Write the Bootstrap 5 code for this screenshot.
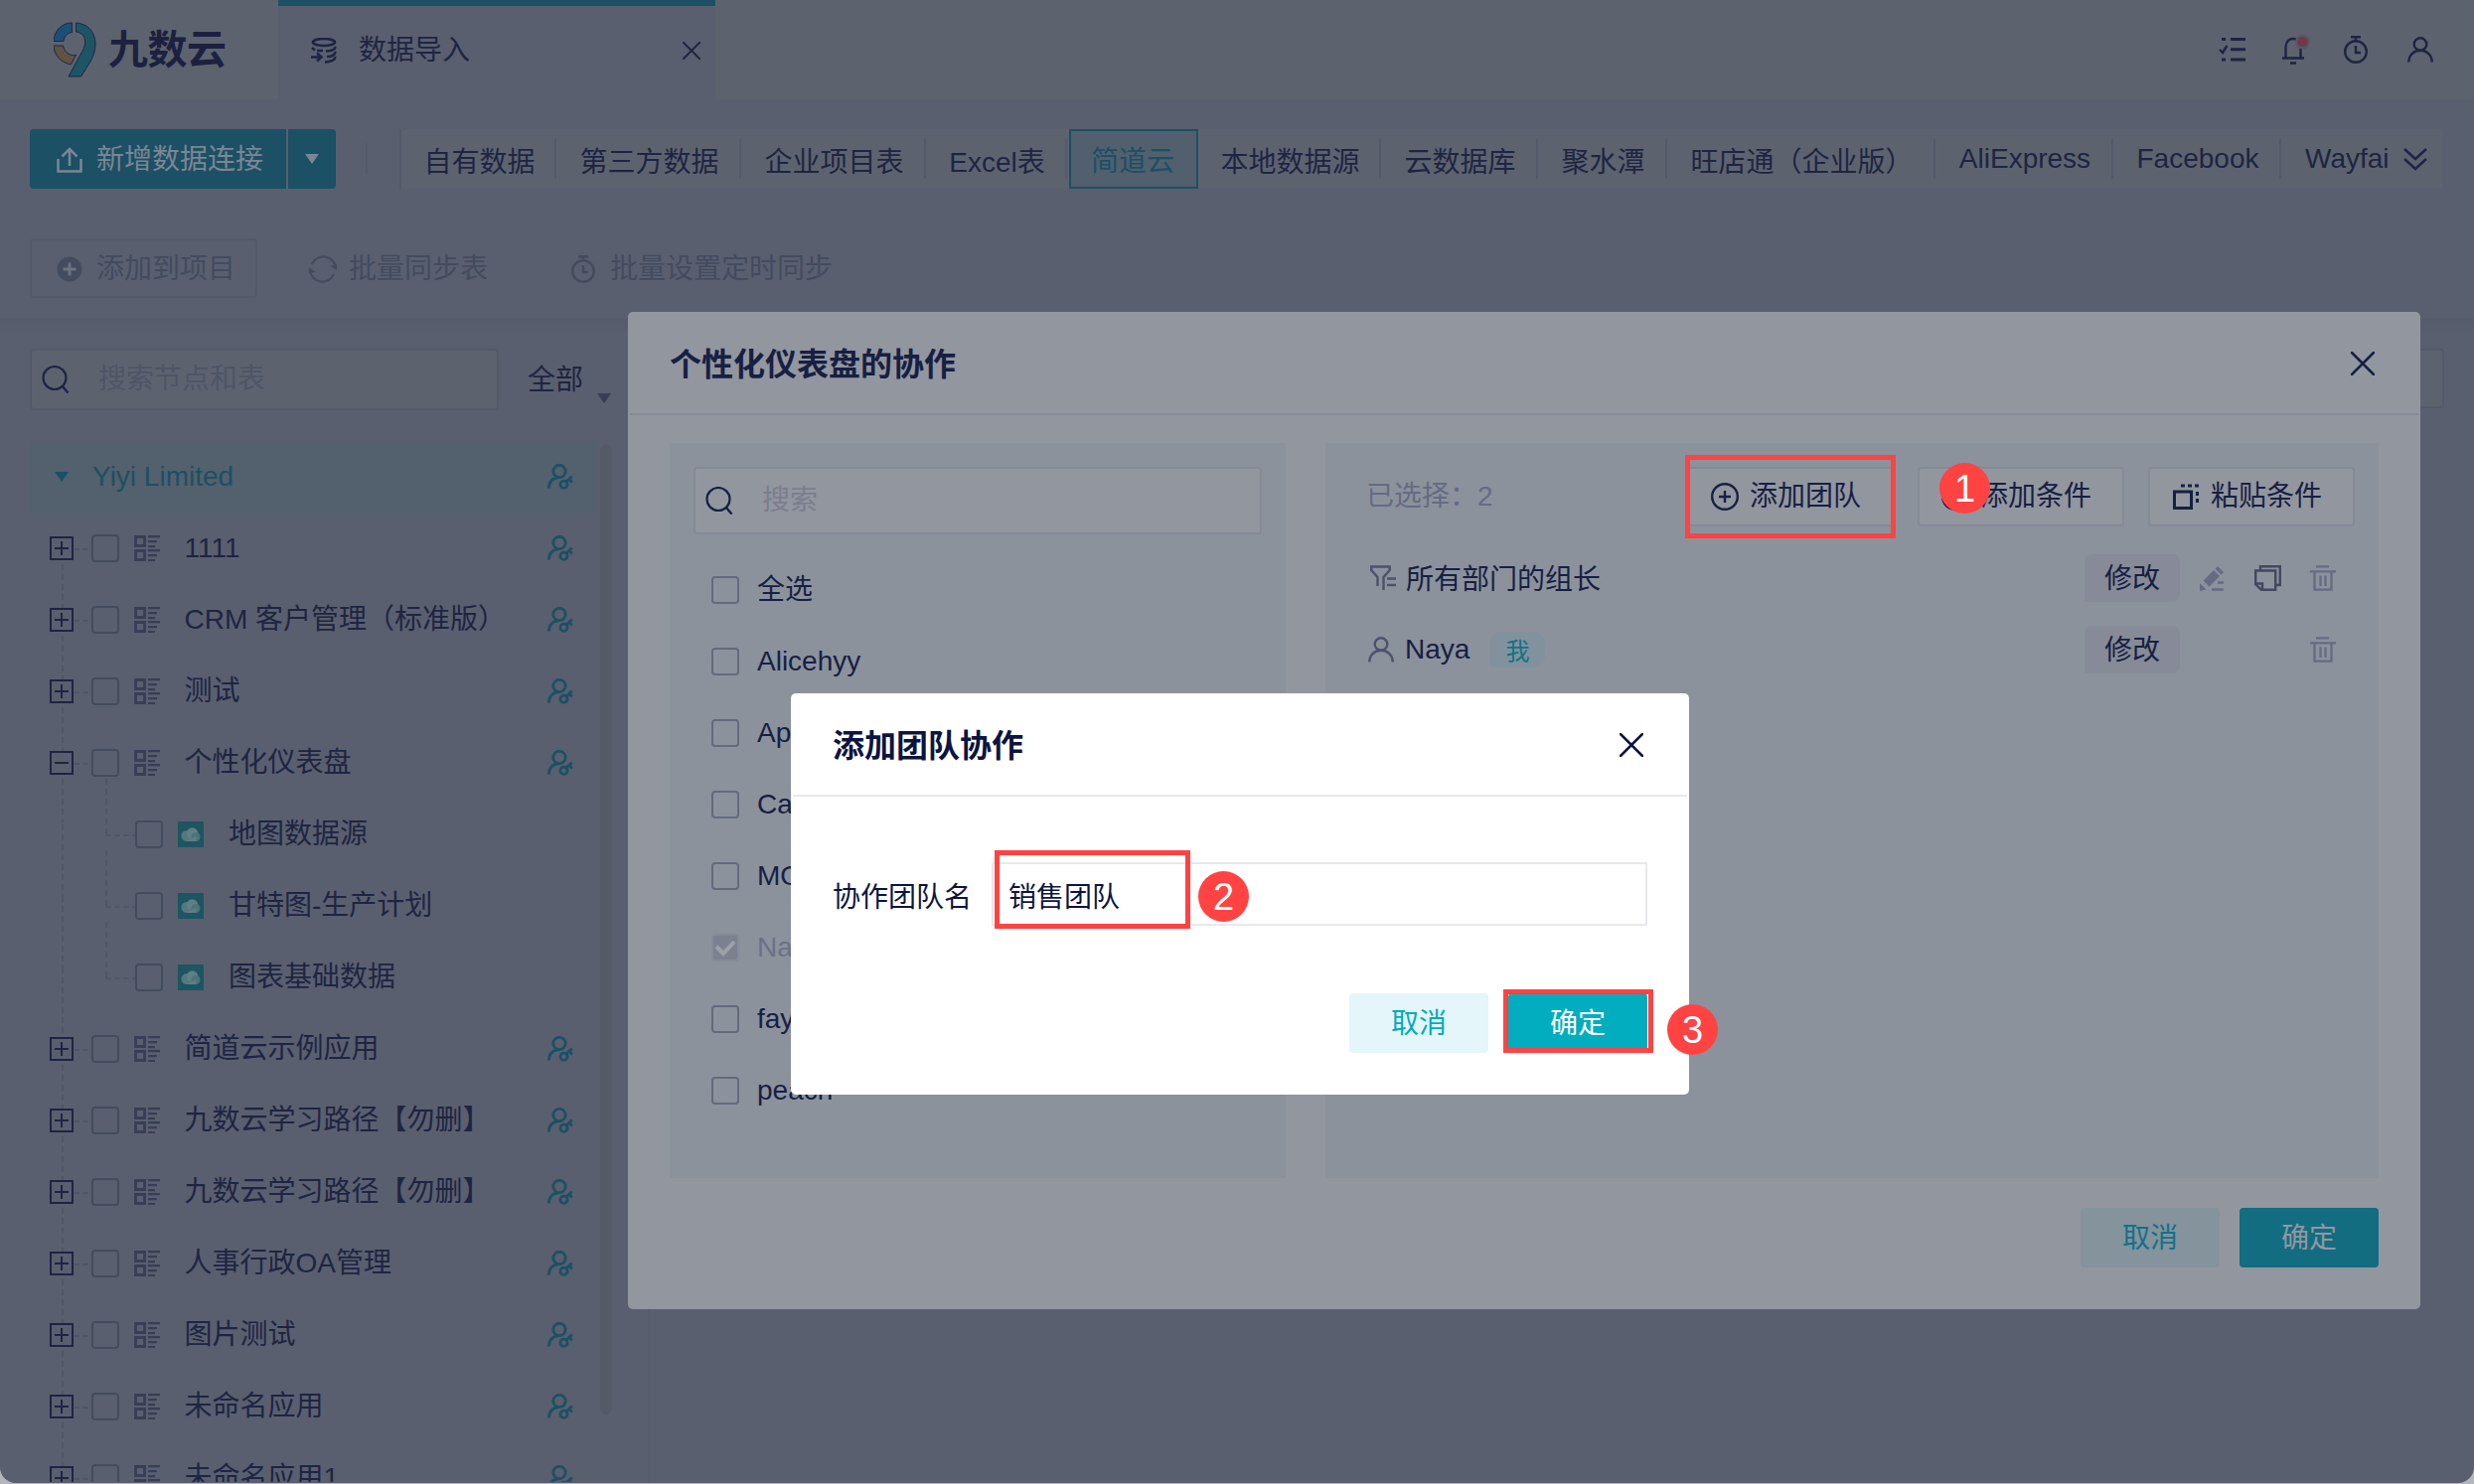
<!DOCTYPE html>
<html lang="zh-CN">
<head>
    <meta charset="UTF-8">
    <meta name="viewport" content="width=device-width, initial-scale=1.0">
    <title>九数云 - 数据导入</title>
    <link href="https://cdn.jsdelivr.net/npm/bootstrap@5.3.0/dist/css/bootstrap.min.css" rel="stylesheet">
    <style>
        :root {
            --ink: #1e2542;
            --ink-modal: #172042;
            --teal: #1c5064;
            --page: #595f6e;
            --bar: #5c636f;
            --line: #545a69;
            --alert: #ff4343;
        }
        body {
            width: 2490px;
            height: 1494px;
            overflow: hidden;
            background: #b5b6b8;
            color: var(--ink);
            font-family: "Liberation Sans", "Noto Sans CJK SC", sans-serif;
            font-size: 28px;
            line-height: 40px;
        }
        svg { display: block; flex: none; fill: none; stroke: currentColor; }
        .app-window {
            height: 1493px;
            background: var(--page);
            border-radius: 0 0 16px 16px;
        }

        /* top bar */
        .topbar { height: 100px; background: var(--bar); }
        .brand { width: 280px; padding-left: 54px; gap: 12px; }
        .brand-name { font-size: 40px; font-weight: 700; letter-spacing: -.5px; color: #1c2140; }
        .page-tab {
            width: 440px;
            background: var(--page);
            border-top: 6px solid var(--teal);
            padding: 0 15px 5px 33px;
        }
        .top-icons { padding-right: 41px; }

        /* source toolbar */
        .source-bar { padding: 30px 32px 0 30px; }
        .btn-new, .btn-new-more {
            height: 60px;
            border: 0;
            border-radius: 4px 0 0 4px;
            background: var(--teal);
            color: #7b8694;
            font-size: 28px;
        }
        .btn-new { width: 258px; padding: 1px 0 0 27px; gap: 14px; margin-right: 2px; }
        .btn-new-more { width: 48px; border-radius: 0 4px 4px 0; padding: 0; }
        .bar-split { width: 2px; height: 32px; margin: 0 32px 0 30px; background: var(--line); }
        .source-tabs { height: 60px; background: var(--bar); border-left: 2px solid var(--line); }
        .source-tab {
            height: 60px;
            flex: none;
            display: flex;
            align-items: center;
            justify-content: center;
            padding-left: 1px;
            white-space: nowrap;
            background: linear-gradient(var(--line), var(--line)) right center / 2px 40px no-repeat;
        }
        .source-tab.cjk { padding-top: 7px; }
        .source-tab.picked {
            border: 2px solid var(--teal);
            background: #525f6e;
            color: var(--teal);
            padding-left: 0;
            padding-right: 2px;
            margin-left: 2px;
            padding-top: 6px;
        }
        .source-tab.plain { background: none; padding-left: 0; }

        .action-bar { padding: 50px 0 0 30px; height: 130px; color: #434b5f; }
        .btn-add {
            width: 229px; height: 60px;
            border: 2px solid var(--line);
            border-radius: 4px;
            color: inherit;
            font-size: 28px;
            padding: 1px 0 0 25px;
            gap: 14px;
        }
        .action-links { height: 60px; padding-top: 2px; }
        .timer-icon { margin: 0 14px 0 83px; }

        /* tree column */
        .workspace { height: 1173px; box-shadow: inset 0 14px 14px -12px rgba(30, 36, 60, .08); border-top: 1px solid #565c6b; }
        .tree-col { width: 654px; border-right: 2px solid #565c6b; padding-left: 30px; }
        .search-box {
            height: 62px;
            border: 2px solid var(--line);
            border-radius: 4px;
            background: var(--bar);
            color: #4e5567;
            padding-left: 10px;
        }
        .tree-root { height: 72px; width: 570px; background: #53606d; color: var(--teal); padding: 0 23px 0 25px; }
        .tree-body { width: 570px; height: 976px; overflow: hidden; }
        .tree-row { position: relative; height: 72px; padding-left: 20px; padding-right: 23px; white-space: nowrap; }
        .tree-row .label-text { margin-left: 24.5px; }
        .tree-row.leaf { padding-left: 106px; }
        .tree-row.leaf .label-text { margin-left: 25px; }
        .tree-row::before, .tree-row.leaf::after, .tree-row.open::after {
            content: "";
            position: absolute;
            width: 2px;
            left: 32px;
            top: 52px;
            height: 44px;
            background: repeating-linear-gradient(#4f5667 0 6px, transparent 6px 10px);
        }
        .tree-row.leaf::before { top: 26px; height: 72px; }
        .tree-row.leaf::after { left: 76px; top: -20px; height: 56px; }
        .tree-row.open::after { left: 76px; top: 52px; height: 20px; }
        .twig { height: 2px; width: 18px; margin-top: 2px; background: repeating-linear-gradient(90deg, #4f5667 0 6px, transparent 6px 9px); }
        .leaf .twig { width: 30px; margin-left: -30px; }
        .tick { width: 28px; height: 28px; border: 2px solid #434b5e; border-radius: 4px; flex: none; }
        .scroll-thumb { width: 12px; height: 976px; border-radius: 6px; background: #545a68; margin: 4px 0 0 4px; }
        .caret { width: 0; height: 0; border: 7px solid transparent; border-top: 10px solid currentColor; border-bottom: 0; }
        .filter-name { margin: 14px 0 0 29px; }
        .filter-caret { margin: 47px 0 0 14px; color: #363d55; }
        .content-search { height: 60px; border: 2px solid var(--line); border-radius: 4px; background: var(--bar); margin: 30px 30px 0 30px; }

        /* collaboration dialog */
        .collab-dialog, .team-dialog { position: absolute; border-radius: 5px; color: var(--ink-modal); }
        .collab-dialog { left: 632px; top: 314px; width: 1804px; height: 1004px; background: #92969f; }
        .dialog-head { height: 104px; margin: 0 2px; padding: 2px 44px 0 40px; border-bottom: 2px solid #858a96; }
        .dialog-title { font-size: 32px; font-weight: 700; margin: 1px 0 0; line-height: 40px; }
        .panes { padding: 28px 42px 0; gap: 40px; height: 768px; }
        .pane { background: #8b929c; height: 740px; }
        .pane-members { width: 620px; padding: 24px; }
        .pane-members .search-box { height: 68px; background: #92969f; border-color: #858a96; color: #7a7e8f; }
        .member { height: 72px; padding-left: 18px; gap: 18px; }
        .member .tick { border-color: #636a7d; }
        .member.locked { color: #6c7187; }
        .member.locked .tick { background: #7c818f; border-color: #868b98; color: #9da1aa; }
        .pane-picked { width: 1060px; padding: 24px 24px 0 41px; }
        .btn-cond {
            width: 208px; height: 60px;
            border: 2px solid #858a96;
            border-radius: 4px;
            background: #92969f;
            color: inherit;
            font-size: 28px;
            padding: 0 0 0 22px;
            gap: 11px;
        }
        .picked-row { height: 72px; padding-right: 19px; }
        .faded { color: #666b82; }
        .row-icon { color: #4c526a; }
        .btn-edit {
            width: 96px; height: 48px;
            background: #868b97;
            border: 0;
            border-radius: 8px 8px 8px 0;
            color: inherit;
            font-size: 28px;
            line-height: 47px;
            padding: 0;
        }
        .me-tag {
            width: 56px; height: 36px;
            border-radius: 12px 12px 12px 0;
            background: #81929d;
            color: #127287;
            font-size: 24px;
            line-height: 40px;
            margin-left: 20px;
        }
        .dialog-foot { gap: 20px; padding: 30px 42px 0; }
        .btn-dlg { width: 140px; height: 60px; border: 0; border-radius: 4px; font-size: 28px; padding: 0; line-height: 59px; }
        .cancel-dim { background: #84939c; color: #12718a; }
        .ok-dim { background: #126d80; color: #9297a1; }

        /* team dialog */
        .team-dialog { left: 796px; top: 698px; width: 904px; height: 404px; background: #fff; color: #0d1440; }
        .team-dialog .dialog-head { border-color: #e8e9ee; }
        .team-form { padding: 66px 42px 0; height: 132px; }
        .team-form label { width: 160px; line-height: 64px; padding-top: 4px; }
        .team-form .form-control {
            height: 64px;
            border: 2px solid #e8e9ee;
            border-radius: 0;
            padding: 2px 16px 0 15px;
            font-size: 28px;
            color: #0d1440;
        }
        .team-dialog .dialog-foot { padding-top: 66px; }
        .cancel-live { background: #e4f6f9; color: #00abbf; }
        .ok-live { background: #02adc0; color: #fff; }

        /* walkthrough marks lying over everything */
        .step-frame { position: absolute; border: 5px solid var(--alert); }
        .step-dot {
            position: absolute;
            width: 51px; height: 51px;
            border-radius: 50%;
            background: var(--alert);
            color: #fff;
            font-size: 38px;
            line-height: 52px;
            text-align: center;
        }
        .frame-1 { left: 1696px; top: 458px; width: 212px; height: 84px; }
        .frame-2 { left: 1001px; top: 856px; width: 197px; height: 79px; }
        .frame-3 { left: 1513px; top: 996px; width: 151px; height: 64px; }
        .dot-1 { left: 1952px; top: 466px; }
        .dot-2 { left: 1206px; top: 877px; }
        .dot-3 { left: 1678px; top: 1011px; }
    </style>
</head>
<body>
    <svg class="d-none">
        <symbol id="i-search" viewBox="0 0 28 28"><circle cx="13" cy="12.5" r="11.5" stroke-width="2.2"/><path d="M20.500 20.500l6 7" stroke-width="2.400"/></symbol>
        <symbol id="i-close" viewBox="0 0 24 24"><path d="M1 1l22 22M23 1L1 23" stroke-width="2.500" stroke-linecap="round"/></symbol>
        <symbol id="i-user" viewBox="0 0 26 26"><circle cx="13" cy="7.500" r="6.300" stroke-width="2.400"/><path d="M1.300 25.500c0-7 5-11.700 11.700-11.700s11.700 4.700 11.700 11.700" stroke-width="2.400"/></symbol>
        <symbol id="i-userkey" viewBox="0 0 26 26"><circle cx="12" cy="7.500" r="6.200" stroke-width="2.800"/><path d="M1.400 24.500c0-6 3.600-10.500 9.600-10.700" stroke-width="2.800"/><circle cx="16.500" cy="20.800" r="3.600" stroke-width="2.800"/><path d="M18.800 18l6-5.500M22 15.500l2.800 3" stroke-width="2.800"/></symbol>
        <symbol id="i-plus" viewBox="0 0 24 24"><path d="M1 1h22v22H1zM5 12h14M12 5v14" stroke-width="2"/></symbol>
        <symbol id="i-minus" viewBox="0 0 24 24"><path d="M1 1h22v22H1zM5 12h14" stroke-width="2"/></symbol>
        <symbol id="i-app" viewBox="0 0 26 26"><path d="M1.500 1.500h9v9h-9zM1.500 15.500h9v9h-9z" stroke-width="2.800"/><path d="M14 1.200h12M14 6.200h9M14 11.200h7M14 15.200h12M14 20.200h9M14 25h7" stroke-width="2.200"/></symbol>
        <symbol id="i-sheet" viewBox="0 0 26 26"><path d="M0 0h26v26H0z" fill="#1d5560" stroke="none"/><circle cx="9" cy="14.500" r="5.500" fill="#557880" stroke="none"/><circle cx="14.500" cy="12" r="5.800" fill="#5f7f87" stroke="none"/><circle cx="18" cy="15.500" r="4.500" fill="#50727b" stroke="none"/><path d="M8 20h10.500v-5z" fill="#5f7f87" stroke="none"/></symbol>
        <symbol id="i-watch" viewBox="0 0 26 28"><circle cx="13" cy="16" r="10.800" stroke-width="2.400"/><path d="M8 1.300h10M13 2v4M13 10v7h5" stroke-width="2.400"/></symbol>
        <symbol id="i-pluscircle" viewBox="0 0 28 28"><circle cx="14" cy="14" r="12.800" stroke-width="2.400"/><path d="M8 14h12M14 8v12" stroke-width="2.400"/></symbol>
        <symbol id="i-trash" viewBox="0 0 26 26"><path d="M6 1.300h13M0 6.300h26M4.500 7v17.700h17V7M10.500 10.500v10.500M15.500 10.500v10.500" stroke-width="2.300"/></symbol>
    </svg>

    <div class="app-window overflow-hidden">
        <header class="topbar d-flex">
            <div class="brand d-flex align-items-center">
                <svg width="43" height="56" viewBox="0 0 43 56" stroke="none">
                    <path d="M0 19.500C0.500 9 8 1 18.500 1v9.500C14 11 10.500 14.500 10 19.500z" fill="#1c4f78"/>
                    <path d="M0 24h9.500c.8 5 5 9.500 11 9.800l2-.8-5 9.800C8 41.500.5 34 0 24z" fill="#605245"/>
                    <path d="M22.500 1C34 1.500 42 10 42 22c0 8-2.500 13-5 18l-9.500 15H15l12-22c4-7 5-10 4.500-15-.5-4-4-7.500-9-8z" fill="#1c5565"/>
                </svg>
                <span class="brand-name">九数云</span>
            </div>
            <div class="page-tab d-flex align-items-center">
                <svg width="26" height="26" viewBox="0 0 26 26" stroke-width="2.600">
                    <ellipse cx="13" cy="4.500" rx="11" ry="3.500"/><path d="M1 10l3 2.500M6 13h6M24 9c1 3-4 4.500-9 4.500M24 14c1 3-3 5-8 5M0 19.500h10M6 15.500l4.500 4-4.500 4M24 19c1 3-4 5.500-10 5.500"/>
                </svg>
                <span style="margin-left:22px">数据导入</span>
                <svg class="ms-auto" width="18" height="18"><use href="#i-close"/></svg>
            </div>
            <div class="top-icons d-flex align-items-center ms-auto">
                <svg width="28" height="26" viewBox="0 0 28 26"><path d="M3 2.500h4M3 23h4M12 2.500h15M12 12.700h15M12 23h15" stroke-width="3"/><path d="M1 13l3 3 4.500-7" stroke-width="2.400"/></svg>
                <svg style="margin:0 32px 0 35px" width="30" height="32" viewBox="0 0 30 32"><path d="M1 24.500h22M4.500 24V14c0-5 2.500-9 7.500-9s7.500 4 7.500 9v10M9 29.500h6" stroke-width="2.400"/><circle cx="21.500" cy="8" r="7.500" fill="#5d5463" stroke="none"/><circle cx="21.500" cy="8" r="5" fill="#70384a" stroke="none"/></svg>
                <svg width="26" height="28"><use href="#i-watch"/></svg>
                <svg style="margin-left:39px" width="26" height="26"><use href="#i-user"/></svg>
            </div>
        </header>

        <div class="source-bar d-flex align-items-center">
            <button class="btn btn-new d-flex align-items-center">
                <svg width="26" height="26" viewBox="0 0 26 26" stroke-width="2.500"><path d="M1.500 12v12.500h23V12M13 19V2M5.500 9.500L13 2l7.500 7.500"/></svg>
                新增数据连接
            </button>
            <button class="btn btn-new-more d-flex align-items-center justify-content-center"><span class="caret"></span></button>
            <div class="bar-split"></div>
            <nav class="source-tabs d-flex flex-grow-1" id="sourceTabs"></nav>
        </div>

        <div class="action-bar d-flex">
            <button class="btn btn-add d-flex align-items-center">
                <svg width="26" height="26" viewBox="0 0 26 26"><circle cx="13" cy="13" r="12.500" fill="currentColor" stroke="none"/><path d="M6.500 13h13M13 6.500v13" stroke="#6b7280" stroke-width="3"/></svg>
                添加到项目
            </button>
            <div class="action-links d-flex align-items-center">
                <svg class="ms-5 me-2" width="36" height="30" viewBox="-3 0 36 30"><path d="M4 10A12.500 12.500 0 0 1 28 14M26 20A12.500 12.500 0 0 1 2 16" stroke-width="2.200"/><path d="M22 12l7 4V10zM8 18l-7-5v6z" fill="currentColor" stroke="none"/></svg>
                <span>批量同步表</span>
                <svg class="timer-icon" width="26" height="28"><use href="#i-watch"/></svg>
                <span>批量设置定时同步</span>
            </div>
        </div>

        <div class="workspace d-flex">
            <aside class="tree-col">
                <div class="d-flex pt-4 mt-1">
                    <div class="search-box d-flex align-items-center" style="width:472px;margin-top:2px">
                        <svg width="28" height="28" color="#1e2542"><use href="#i-search"/></svg>
                        <span style="margin-left:29px">搜索节点和表</span>
                    </div>
                    <span class="filter-name">全部</span>
                    <span class="caret filter-caret"></span>
                </div>
                <div class="d-flex" style="margin-top:31px">
                    <div>
                        <div class="tree-root d-flex align-items-center">
                            <span class="caret"></span>
                            <span class="ms-4">Yiyi Limited</span>
                            <svg class="ms-auto" width="26" height="26"><use href="#i-userkey"/></svg>
                        </div>
                        <div class="tree-body" id="treeBody"></div>
                    </div>
                    <div class="scroll-thumb"></div>
                </div>
            </aside>
            <main class="flex-grow-1">
                <div class="content-search"></div>
            </main>
        </div>
    </div>

    <section class="collab-dialog">
        <div class="dialog-head d-flex align-items-center justify-content-between">
            <h1 class="dialog-title">个性化仪表盘的协作</h1>
            <svg width="24" height="24"><use href="#i-close"/></svg>
        </div>
        <div class="panes d-flex">
            <div class="pane pane-members">
                <div class="search-box d-flex align-items-center">
                    <svg width="28" height="28" color="#172042"><use href="#i-search"/></svg>
                    <span style="margin-left:29px">搜索</span>
                </div>
                <div id="memberList" style="padding-top:20px"></div>
            </div>
            <div class="pane pane-picked">
                <div class="d-flex align-items-center" style="gap:24px">
                    <span class="faded me-auto">已选择：2</span>
                    <button class="btn btn-cond d-flex align-items-center"><svg width="28" height="28"><use href="#i-pluscircle"/></svg>添加团队</button>
                    <button class="btn btn-cond d-flex align-items-center"><svg width="28" height="28"><use href="#i-pluscircle"/></svg>添加条件</button>
                    <button class="btn btn-cond d-flex align-items-center">
                        <svg width="28" height="28" viewBox="0 0 28 28" stroke-width="3"><path d="M2.500 9h17v16.500h-17z"/><path d="M9 3h18" stroke-dasharray="4 3"/><path d="M25.500 9v14" stroke-dasharray="4 3"/></svg>粘贴条件
                    </button>
                </div>
                <div style="padding-top:16px">
                    <div class="picked-row d-flex align-items-center">
                        <svg class="row-icon ms-1" width="26" height="26" viewBox="0 0 26 26" stroke-width="2.400"><path d="M7.500 21v-9L1.200 5V1.500h18.500V5l-6.200 7v13M17 13.500h9M17 20h9"/></svg>
                        <span style="margin:4px auto 0 10px">所有部门的组长</span>
                        <button class="btn btn-edit">修改</button>
                        <svg class="faded" style="margin-left:20px" width="25" height="25" viewBox="0 0 25 25"><path d="M3.500 14.500L14 4l6 6L9.500 20.500z M15.500 2.500L18 0l6 6-2.500 2.500zM0 25v-8l6.500 6.500z" fill="currentColor" stroke="none"/><path d="M18 16.500h6M12 23.500h12" stroke-width="2.400"/></svg>
                        <svg style="margin-left:30px;color:#42485f" width="27" height="26" viewBox="0 0 27 26" stroke-width="2.400"><path d="M6 5V1.200h19.800V20H22M1.200 5.500h20v19.300H7l-5.800-5.500zM1.200 18.500H8v6"/></svg>
                        <svg class="faded" style="margin-left:29px" width="26" height="26"><use href="#i-trash"/></svg>
                    </div>
                    <div class="picked-row d-flex align-items-center">
                        <svg class="row-icon" style="margin-left:2px" width="26" height="26"><use href="#i-user"/></svg>
                        <span style="margin-left:11px">Naya</span>
                        <span class="me-tag text-center me-auto">我</span>
                        <button class="btn btn-edit">修改</button>
                        <svg class="faded" style="margin-left:131px" width="26" height="26"><use href="#i-trash"/></svg>
                    </div>
                </div>
            </div>
        </div>
        <div class="dialog-foot d-flex justify-content-end">
            <button class="btn btn-dlg cancel-dim">取消</button>
            <button class="btn btn-dlg ok-dim">确定</button>
        </div>
    </section>

    <section class="team-dialog">
        <div class="dialog-head d-flex align-items-center justify-content-between">
            <h2 class="dialog-title">添加团队协作</h2>
            <svg width="24" height="24"><use href="#i-close"/></svg>
        </div>
        <div class="team-form d-flex">
            <label for="teamName">协作团队名</label>
            <input type="text" class="form-control flex-grow-1 w-auto" id="teamName" value="销售团队">
        </div>
        <div class="dialog-foot d-flex justify-content-end">
            <button class="btn btn-dlg cancel-live">取消</button>
            <button class="btn btn-dlg ok-live">确定</button>
        </div>
    </section>

    <div class="step-frame frame-1"></div>
    <div class="step-frame frame-2"></div>
    <div class="step-frame frame-3"></div>
    <div class="step-dot dot-1">1</div>
    <div class="step-dot dot-2">2</div>
    <div class="step-dot dot-3">3</div>

    <script src="https://cdn.jsdelivr.net/npm/bootstrap@5.3.0/dist/js/bootstrap.bundle.min.js"></script>
    <script>
        const icon = (name, size) =>
            `<svg width="${size}" height="${size}"><use href="#i-${name}"/></svg>`;

        // data sources: [name, tab width]
        const sources = [
            ['自有数据', 156], ['第三方数据', 186], ['企业项目表', 186], ['Excel表', 142], ['简道云', 130],
            ['本地数据源', 184], ['云数据库', 158], ['聚水潭', 130], ['旺店通（企业版）', 270],
            ['AliExpress', 179], ['Facebook', 169]
        ];
        document.getElementById('sourceTabs').innerHTML = sources.map(([name, width]) => {
            const cjk = /[^\x00-\x7f]/.test(name) ? 'cjk' : '';
            const picked = name === '简道云' ? 'picked' : '';
            return `<div class="source-tab ${cjk} ${picked}" style="width:${width}px">${name}</div>`;
        }).join('') + `<div class="source-tab plain ms-4">Wayfai
            <svg style="margin-left:13px" width="26" height="24" viewBox="0 0 26 24" stroke-width="2.500"><path d="M2 2l11 10L24 2M2 12l11 10 11-10"/></svg></div>`;

        const nodes = ['1111', 'CRM 客户管理（标准版）', '测试', '个性化仪表盘', '>地图数据源', '>甘特图-生产计划',
            '>图表基础数据', '简道云示例应用', '九数云学习路径【勿删】', '九数云学习路径【勿删】', '人事行政OA管理',
            '图片测试', '未命名应用', '未命名应用1'];
        document.getElementById('treeBody').innerHTML = nodes.map((name, i) => {
            if (name[0] === '>') {
                return `<div class="tree-row leaf d-flex align-items-center"><span class="twig"></span><span class="tick"></span>
                    <span style="margin-left:15px">${icon('sheet', 26)}</span><span class="label-text">${name.slice(1)}</span></div>`;
            }
            const open = nodes[i + 1] && nodes[i + 1][0] === '>';
            return `<div class="tree-row d-flex align-items-center ${open ? 'open' : ''}">${icon(open ? 'minus' : 'plus', 24)}
                <span class="twig"></span><span class="tick"></span>
                <span style="margin-left:15px;color:#373e55">${icon('app', 26)}</span><span class="label-text">${name}</span>
                <span class="ms-auto" style="color:#1c5064">${icon('userkey', 26)}</span></div>`;
        }).join('');

        const members = ['全选', 'Alicehyy', 'Apple', 'Candy', 'MOMO', 'Naya', 'fay', 'peach'];
        document.getElementById('memberList').innerHTML = members.map(name => {
            const locked = name === 'Naya';
            const tick = locked ? '<svg width="24" height="24" viewBox="0 0 24 24" stroke-width="4"><path d="M3 11l7 7L21 6"/></svg>' : '';
            return `<div class="member d-flex align-items-center ${locked ? 'locked' : ''}"><span class="tick">${tick}</span><span>${name}</span></div>`;
        }).join('');
    </script>
</body>
</html>
